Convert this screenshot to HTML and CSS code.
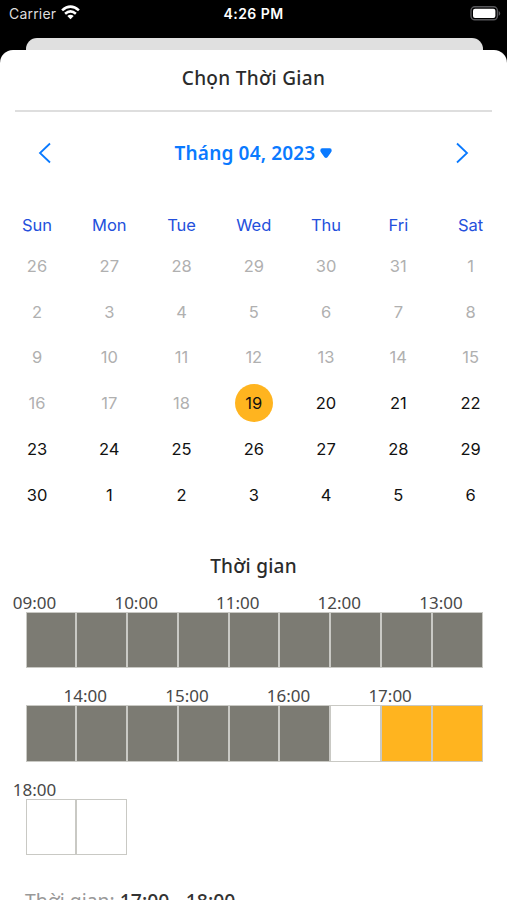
FILE: index.html
```html
<!DOCTYPE html>
<html lang="vi">
<head>
<meta charset="utf-8">
<title>Chọn Thời Gian</title>
<link rel="stylesheet" href="styles.css">
</head>
<body>
<header class="status">
  <div class="carrier"><span>Carrier</span>
    <svg class="wifi" width="19" height="15" viewBox="0 0 19 15" fill="none" stroke="#fff" stroke-width="2.6"><path d="M1.1 5.4Q9.5-2.1 17.900 5.400M4.100 8.700Q9.500 4 14.900 8.700"/><path d="M6.300 11Q9.500 8.500 12.700 11L9.500 14.200Z" fill="#fff" stroke="none"/></svg>
  </div>
  <span class="clock">4:26 PM</span>
  <svg class="battery" width="31" height="15" viewBox="0 0 31 15"><rect x="1" y=".8" width="26.4" height="13" rx="3.8" fill="none" stroke="#57575a" stroke-width="1.4"/><rect x="3" y="2.7" width="22.4" height="9.2" rx="2" fill="#fff"/><path d="M28.7 5v4.8q1.5-.8 1.5-2.4T28.7 5Z" fill="#57575a"/></svg>
</header>
<div class="backdrop"></div>
<main class="sheet">
  <h1 class="title">Chọn Thời Gian</h1>
  <nav class="month">
    <svg width="14" height="22" viewBox="0 0 14 22" fill="none" stroke="#0a7aff" stroke-width="1.8"><path d="M12 1.5 2 11l10 9.5"/></svg>
    <div class="month-name"><span>Tháng 04, 2023</span><svg width="12" height="11" viewBox="0 0 12 11" fill="#0a7aff"><path d="M2.2.3h7.600q1.900 0 1.900 2.200 0 1-.8 2.100L7.500 9.200Q6 10.800 4.500 9.200L1.100 4.600Q.3 3.500.3 2.500q0-2.200 1.900-2.200Z"/></svg></div>
    <svg width="14" height="22" viewBox="0 0 14 22" fill="none" stroke="#0a7aff" stroke-width="1.8"><path d="m2 1.500 10 9.500-10 9.500"/></svg>
  </nav>
  <div class="weekdays"><span>Sun</span><span>Mon</span><span>Tue</span><span>Wed</span><span>Thu</span><span>Fri</span><span>Sat</span></div>
  <div class="days">
    <span class="off">26</span><span class="off">27</span><span class="off">28</span><span class="off">29</span><span class="off">30</span><span class="off">31</span><span class="off">1</span>
    <span class="off">2</span><span class="off">3</span><span class="off">4</span><span class="off">5</span><span class="off">6</span><span class="off">7</span><span class="off">8</span>
    <span class="off">9</span><span class="off">10</span><span class="off">11</span><span class="off">12</span><span class="off">13</span><span class="off">14</span><span class="off">15</span>
    <span class="off">16</span><span class="off">17</span><span class="off">18</span><span class="selected">19</span><span>20</span><span>21</span><span>22</span>
    <span>23</span><span>24</span><span>25</span><span>26</span><span>27</span><span>28</span><span>29</span>
    <span>30</span><span>1</span><span>2</span><span>3</span><span>4</span><span>5</span><span>6</span>
  </div>
  <h2 class="subtitle">Thời gian</h2>
  <div class="slots">
    <div class="slot busy"><span>09:00</span><i></i></div><div class="slot busy"><span></span><i></i></div>
    <div class="slot busy"><span>10:00</span><i></i></div><div class="slot busy"><span></span><i></i></div>
    <div class="slot busy"><span>11:00</span><i></i></div><div class="slot busy"><span></span><i></i></div>
    <div class="slot busy"><span>12:00</span><i></i></div><div class="slot busy"><span></span><i></i></div>
    <div class="slot busy"><span>13:00</span><i></i></div><div class="slot busy"><span></span><i></i></div>
    <div class="slot busy"><span>14:00</span><i></i></div><div class="slot busy"><span></span><i></i></div>
    <div class="slot busy"><span>15:00</span><i></i></div><div class="slot busy"><span></span><i></i></div>
    <div class="slot busy"><span>16:00</span><i></i></div><div class="slot"><span></span><i></i></div>
    <div class="slot picked"><span>17:00</span><i></i></div><div class="slot picked"><span></span><i></i></div>
    <div class="slot"><span>18:00</span><i></i></div><div class="slot"><span></span><i></i></div>
  </div>
  <p class="summary">Thời gian: <b>17:00 - 18:00</b></p>
</main>
</body>
</html>
```
FILE: styles.css
```css
* { box-sizing: border-box; }
body {
  margin: 0;
  height: 900px;
  overflow: hidden;
  background: #000;
  font-family: "Noto Sans", "Open Sans", sans-serif;
  color: #2b2b2b;
}
.status {
  display: grid;
  grid-template-columns: 1fr auto 1fr;
  align-items: center;
  height: 38px;
  padding: 0 6px 11px 9px;
  font: 14px/20px Inter, sans-serif;
  color: #fff;
}
.carrier { display: flex; align-items: center; gap: 5px; color: #ddd; letter-spacing: .2px; }
.wifi { margin-top: -2px; }
.clock { margin-right: 3px; font-weight: 600; letter-spacing: .45px; }
.battery { justify-self: end; }
.backdrop {
  height: 12px;
  margin: 0 24px 0 26px;
  border-radius: 11px 11px 0 0;
  background: #e0e0e0;
}
.sheet {
  height: 850px;
  overflow: hidden;
  border-radius: 13px 13px 0 0;
  background: #fff;
}
.title {
  height: 62px;
  margin: 0 15px;
  border-bottom: 2px solid #dedede;
  text-align: center;
  font-size: 19px;
  font-weight: 500;
  line-height: 56px;
  letter-spacing: .33px;
}
.month {
  display: flex;
  justify-content: space-between;
  align-items: center;
  height: 82px;
  padding: 0 38px;
  color: #0a7aff;
}
.month-name {
  display: flex;
  align-items: center;
  gap: 5px;
  font-size: 19px;
  font-weight: 600;
  letter-spacing: .17px;
}
.weekdays, .days {
  display: grid;
  grid-template-columns: repeat(7, 1fr);
  margin: 0 .3px 0 .9px;
  justify-items: center;
  align-items: center;
  font-family: Inter, sans-serif;
}
.weekdays { height: 62px; color: #2450dc; font-size: 16.5px; line-height: 62px; }
.days { grid-auto-rows: 45.8px; margin-top: -13px; color: #111; font-size: 16.5px; }
.days span { width: 38px; line-height: 38px; text-align: center; }
.days .off { color: #b0b0b0; }
.days .selected { border-radius: 50%; background: #ffb41f; }
.subtitle {
  margin: 32px 0 0;
  text-align: center;
  font-size: 19px;
  font-weight: 500;
  line-height: 32px;
  letter-spacing: .25px;
}
.slots {
  display: grid;
  grid-template-columns: repeat(9, 50.8px);
  row-gap: 17px;
  margin: 10.5px 0 0 25.5px;
}
.slot span {
  display: block;
  height: 20px;
  margin-left: -12.7px;
  color: #484848;
  font-size: 17px;
  line-height: 21px;
  white-space: nowrap;
}
.slot i { display: block; height: 56.2px; border: 1px solid #c9c9c4; }
.busy i { background: #7c7b73; }
.picked i { background: #ffb41f; }
.summary { margin: 33px 25px 0; color: #999; font-size: 19.4px; line-height: 26px; white-space: nowrap; }
.summary b { color: #333; font-weight: 500; }
```
